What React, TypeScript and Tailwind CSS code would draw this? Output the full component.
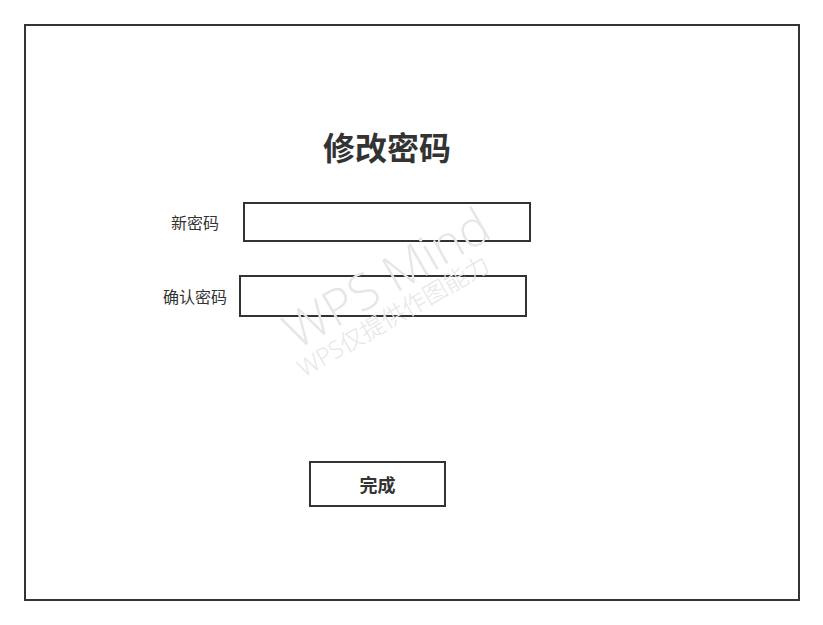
import React from "react";

const cjk = "font-['Noto_Sans_CJK_SC',sans-serif]";

const App: React.FC = () => {
    return (
        <div className={`w-[823px] h-[625px] bg-white pt-[24px] pl-[24px] text-[#333] ${cjk}`}>
            {/* FRAME */}
            <div className="relative w-[776px] h-[577px] border-2 border-[#333] flex flex-col items-start">
                <h1 className="ml-[297px] mt-[100px] text-[32px] leading-[40px] font-bold">修改密码</h1>

                {/* NEW PASSWORD */}
                <div className="mt-[36px] ml-[129px] flex items-center">
                    <span className="w-[80px] text-center text-[16px] leading-[20px]">新密码</span>
                    <input type="password" className="ml-[8px] w-[288px] h-[40px] border-2 border-[#333] bg-transparent outline-none" />
                </div>

                {/* CONFIRM PASSWORD */}
                <div className="mt-[33px] ml-[129px] flex items-center">
                    <span className="w-[80px] text-center text-[16px] leading-[20px]">确认密码</span>
                    <input type="password" className="ml-[4px] w-[288px] h-[42px] border-2 border-[#333] bg-transparent outline-none" />
                </div>

                <button className="mt-[144px] ml-[283px] w-[137px] h-[46px] border-2 border-[#333] text-[18px] font-bold">
                    完成
                </button>

                {/* WATERMARK */}
                <div className="absolute left-[366px] top-[262px] -translate-x-1/2 -translate-y-1/2 rotate-[-30deg] pointer-events-none text-center whitespace-nowrap text-[#e6e6e6] font-['Open_Sans','Noto_Sans_CJK_SC',sans-serif] font-light">
                    <div className="text-[50px] leading-[52px]">WPS Mind</div>
                    <div className="-mt-[3px] pr-[26px] text-[24px] leading-[28px]">WPS仅提供作图能力</div>
                </div>
            </div>
        </div>
    );
};

export default App;
